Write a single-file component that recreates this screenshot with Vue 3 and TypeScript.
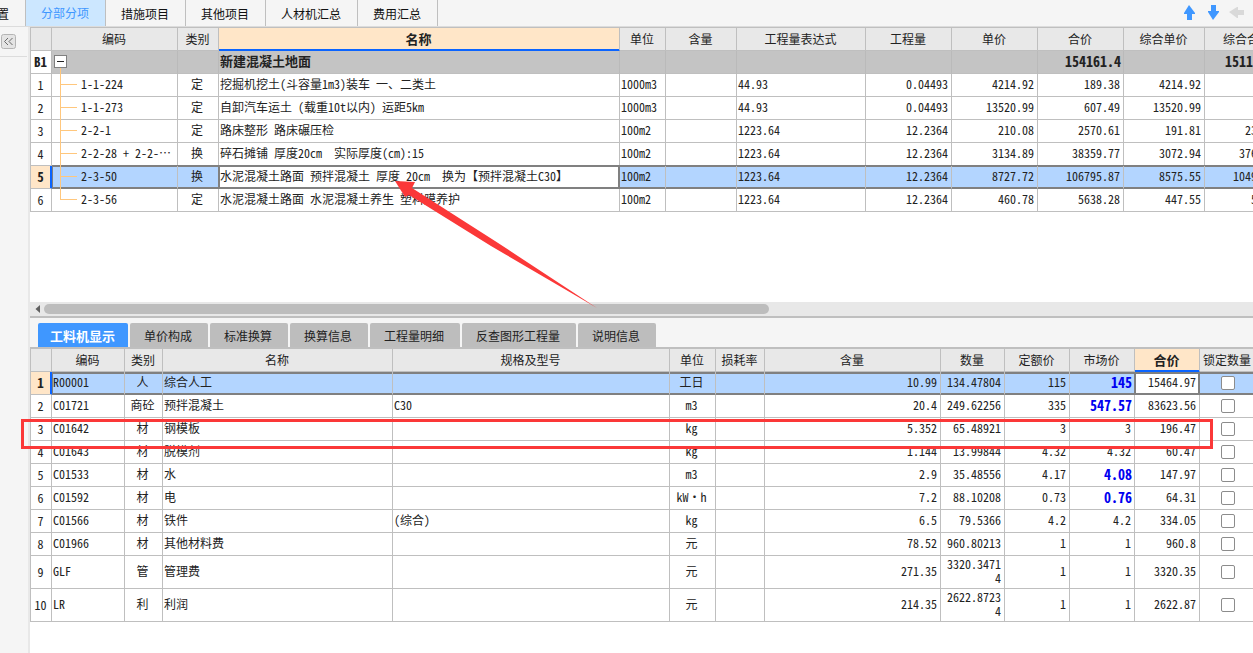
<script setup lang="ts">
import { ref } from 'vue'

interface Item {
  no: string
  code: string
  kind: string
  name: string
  unit: string
  expr: string
  qty: string
  price: string
  total: string
  compPrice: string
  compTotal: string
}

interface Resource {
  no: number
  code: string
  kind: string
  name: string
  spec: string
  unit: string
  content: string
  qty: string
  quota: string
  market: string
  adjusted?: boolean
  total: string
}

const topTabs = ['分部分项', '措施项目', '其他项目', '人材机汇总', '费用汇总']
const activeTop = ref('分部分项')

const detailTabs = ['工料机显示', '单价构成', '标准换算', '换算信息', '工程量明细', '反查图形工程量', '说明信息']
const activeDetail = ref('工料机显示')

const items: Item[] = [
  { no: '1', code: '1-1-224', kind: '定', name: '挖掘机挖土(斗容量1m3)装车 一、二类土', unit: '1000m3', expr: '44.93', qty: '0.04493', price: '4214.92', total: '189.38', compPrice: '4214.92', compTotal: '189.4' },
  { no: '2', code: '1-1-273', kind: '定', name: '自卸汽车运土 (载重10t以内) 运距5km', unit: '1000m3', expr: '44.93', qty: '0.04493', price: '13520.99', total: '607.49', compPrice: '13520.99', compTotal: '607.5' },
  { no: '3', code: '2-2-1', kind: '定', name: '路床整形 路床碾压检', unit: '100m2', expr: '1223.64', qty: '12.2364', price: '210.08', total: '2570.61', compPrice: '191.81', compTotal: '2347.06' },
  { no: '4', code: '2-2-28 + 2-2-⋯', kind: '换', name: '碎石摊铺 厚度20cm  实际厚度(cm):15', unit: '100m2', expr: '1223.64', qty: '12.2364', price: '3134.89', total: '38359.77', compPrice: '3072.94', compTotal: '37601.72' },
  { no: '5', code: '2-3-50', kind: '换', name: '水泥混凝土路面 预拌混凝土 厚度 20cm  换为【预拌混凝土C30】', unit: '100m2', expr: '1223.64', qty: '12.2364', price: '8727.72', total: '106795.87', compPrice: '8575.55', compTotal: '104933.86' },
  { no: '6', code: '2-3-56', kind: '定', name: '水泥混凝土路面 水泥混凝土养生 塑料膜养护', unit: '100m2', expr: '1223.64', qty: '12.2364', price: '460.78', total: '5638.28', compPrice: '447.55', compTotal: '5476.4' },
]

const resources: Resource[] = [
  { no: 1, code: 'R00001', kind: '人', name: '综合人工', spec: '', unit: '工日', content: '10.99', qty: '134.47804', quota: '115', market: '145', adjusted: true, total: '15464.97' },
  { no: 2, code: 'C01721', kind: '商砼', name: '预拌混凝土', spec: 'C30', unit: 'm3', content: '20.4', qty: '249.62256', quota: '335', market: '547.57', adjusted: true, total: '83623.56' },
  { no: 3, code: 'C01642', kind: '材', name: '钢模板', spec: '', unit: 'kg', content: '5.352', qty: '65.48921', quota: '3', market: '3', total: '196.47' },
  { no: 4, code: 'C01643', kind: '材', name: '脱模剂', spec: '', unit: 'kg', content: '1.144', qty: '13.99844', quota: '4.32', market: '4.32', total: '60.47' },
  { no: 5, code: 'C01533', kind: '材', name: '水', spec: '', unit: 'm3', content: '2.9', qty: '35.48556', quota: '4.17', market: '4.08', adjusted: true, total: '147.97' },
  { no: 6, code: 'C01592', kind: '材', name: '电', spec: '', unit: 'kW·h', content: '7.2', qty: '88.10208', quota: '0.73', market: '0.76', adjusted: true, total: '64.31' },
  { no: 7, code: 'C01566', kind: '材', name: '铁件', spec: '(综合)', unit: 'kg', content: '6.5', qty: '79.5366', quota: '4.2', market: '4.2', total: '334.05' },
  { no: 8, code: 'C01966', kind: '材', name: '其他材料费', spec: '', unit: '元', content: '78.52', qty: '960.80213', quota: '1', market: '1', total: '960.8' },
  { no: 9, code: 'GLF', kind: '管', name: '管理费', spec: '', unit: '元', content: '271.35', qty: '3320.34714', quota: '1', market: '1', total: '3320.35' },
  { no: 10, code: 'LR', kind: '利', name: '利润', spec: '', unit: '元', content: '214.35', qty: '2622.87234', quota: '1', market: '1', total: '2622.87' },
]

const selectedItem = ref('5')
const selectedResource = ref(1)
const locked = ref<number[]>([])
</script>

<template>
  <div class="app">
    <header class="topbar">
      <button type="button" class="top-tab cut">置</button>
      <button
        v-for="tab in topTabs"
        :key="tab"
        type="button"
        class="top-tab"
        :class="{ active: tab === activeTop }"
        @click="activeTop = tab"
      >{{ tab }}</button>
      <div class="tools">
        <button type="button" class="tool" aria-label="上移">
          <svg width="16" height="16" viewBox="0 0 16 16"><path d="M8 0 L14 8 V9 H11 V15 H6 V9 H3 V8 Z" fill="#3f97ff" /></svg>
        </button>
        <button type="button" class="tool" aria-label="下移">
          <svg width="16" height="16" viewBox="0 0 16 16"><path d="M8 15 L14 7 V6 H11 V0 H6 V6 H3 V7 Z" fill="#3f97ff" /></svg>
        </button>
        <button type="button" class="tool" aria-label="升级" disabled>
          <svg width="16" height="16" viewBox="0 0 16 16"><path d="M0 7 L8 2 H9 V5 H15 V10 H9 V13 H8 Z" fill="#d9d9d9" /></svg>
        </button>
      </div>
    </header>

    <div class="body">
      <aside class="side">
        <div class="side-head">
          <button type="button" class="collapse" aria-label="收起">
            <svg width="15" height="15" viewBox="0 0 15 15">
              <rect x="0.5" y="0.5" width="14" height="14" rx="2" fill="#e4e4e4" stroke="#b4b4b4" />
              <path d="M7 4 L3.5 7.5 L7 11 M11.5 4 L8 7.5 L11.5 11" fill="none" stroke="#6a6a6a" />
            </svg>
          </button>
        </div>
      </aside>

      <main class="main">
        <section class="upper">
          <table class="grid items">
            <colgroup>
              <col class="c-no"><col class="c-code"><col class="c-kind"><col class="c-name"><col class="c-unit"><col class="c-content">
              <col class="c-expr"><col class="c-num"><col class="c-num"><col class="c-num"><col class="c-comp"><col class="c-num">
            </colgroup>
            <thead>
              <tr>
                <th></th><th>编码</th><th>类别</th><th class="current">名称</th><th>单位</th><th>含量</th>
                <th>工程量表达式</th><th>工程量</th><th>单价</th><th>合价</th><th>综合单价</th><th>综合合价</th>
              </tr>
            </thead>
            <tbody>
              <tr class="group">
                <td class="no">B1</td>
                <td class="root">
                  <button type="button" class="fold" aria-label="折叠">
                    <svg width="13" height="13" viewBox="0 0 13 13">
                      <rect x="0.5" y="0.5" width="12" height="12" fill="#fff" stroke="#808080" />
                      <path d="M3 6.5 H10" stroke="#222" />
                    </svg>
                  </button>
                </td>
                <td></td><td>新建混凝土地面</td><td></td><td></td><td></td><td></td><td></td>
                <td class="r strong">154161.4</td><td></td><td class="r strong">151155.92</td>
              </tr>
              <tr
                v-for="item in items"
                :key="item.no"
                :class="{ selected: item.no === selectedItem }"
                @click="selectedItem = item.no"
              >
                <td class="no">{{ item.no }}</td>
                <td class="branch">{{ item.code }}</td>
                <td class="c">{{ item.kind }}</td>
                <td class="cursor">{{ item.name }}</td>
                <td>{{ item.unit }}</td>
                <td></td>
                <td>{{ item.expr }}</td>
                <td class="r">{{ item.qty }}</td>
                <td class="r">{{ item.price }}</td>
                <td class="r">{{ item.total }}</td>
                <td class="r">{{ item.compPrice }}</td>
                <td class="r">{{ item.compTotal }}</td>
              </tr>
            </tbody>
          </table>
        </section>

        <div class="scroll">
          <svg class="scroll-left" width="6" height="8" viewBox="0 0 6 8"><path d="M5 0 V8 L0.5 4 Z" fill="#606060" /></svg>
          <div class="track"><div class="thumb"></div></div>
        </div>

        <nav class="detail-tabs">
          <button
            v-for="tab in detailTabs"
            :key="tab"
            type="button"
            class="detail-tab"
            :class="{ active: tab === activeDetail }"
            @click="activeDetail = tab"
          >{{ tab }}</button>
        </nav>

        <section class="lower">
          <table class="grid resources">
            <colgroup>
              <col class="c-no"><col class="d-code"><col class="d-kind"><col class="d-name"><col class="d-spec"><col class="c-unit"><col class="d-loss">
              <col class="d-content"><col class="d-qty"><col class="d-price"><col class="d-price"><col class="d-price"><col class="d-lock">
            </colgroup>
            <thead>
              <tr>
                <th></th><th>编码</th><th>类别</th><th>名称</th><th>规格及型号</th><th>单位</th><th>损耗率</th>
                <th>含量</th><th>数量</th><th>定额价</th><th>市场价</th><th class="current">合价</th><th>锁定数量</th>
              </tr>
            </thead>
            <tbody>
              <tr
                v-for="res in resources"
                :key="res.no"
                :class="{ selected: res.no === selectedResource }"
                @click="selectedResource = res.no"
              >
                <td class="no">{{ res.no }}</td>
                <td class="first">{{ res.code }}</td>
                <td class="c">{{ res.kind }}</td>
                <td>{{ res.name }}</td>
                <td>{{ res.spec }}</td>
                <td class="c">{{ res.unit }}</td>
                <td></td>
                <td class="r">{{ res.content }}</td>
                <td class="r wrap">{{ res.qty }}</td>
                <td class="r">{{ res.quota }}</td>
                <td class="r" :class="{ adjusted: res.adjusted }">{{ res.market }}</td>
                <td class="r cursor">{{ res.total }}</td>
                <td class="lock"><input v-model="locked" type="checkbox" :value="res.no" :aria-label="'锁定数量 ' + res.name"></td>
              </tr>
            </tbody>
          </table>
        </section>
      </main>
    </div>

    <svg class="pointer" width="206" height="130" viewBox="0 0 206 130">
      <path d="M3 2 L23 3 L20 9 L103 62 L205 129 L99 67 L17 16 L13 18 Z" fill="#fb3838" />
    </svg>
    <div class="mark"></div>
  </div>
</template>

<style>
html,
body {
  background: #fff;
}
</style>

<style scoped>
.app {
  position: relative;
  display: flex;
  flex-direction: column;
  min-height: 100vh;
  overflow: hidden;
  background: #f5f5f5;
  color: #222;
  font-family: "Noto Sans CJK SC", "Liberation Sans", sans-serif;
  font-size: 12px;
  line-height: 14px;
  font-feature-settings: "hwid";
}

button {
  margin: 0;
  padding: 0;
  border: 0;
  background: none;
  color: inherit;
  font: inherit;
  font-feature-settings: inherit;
}

.topbar {
  display: flex;
  height: 26px;
  border-bottom: 1px solid #dcdcdc;
}

.top-tab {
  padding: 2px 16px 0 15px;
  border-right: 1px solid #bfbfbf;
  color: #111;
  white-space: nowrap;
}

.top-tab.cut {
  width: 26px;
  padding: 2px 16px 0 0;
  direction: rtl;
}

.top-tab.active {
  padding-top: 0;
  background: #cce7ff;
  color: #3f97ff;
}

.tools {
  display: flex;
  gap: 8px;
  align-items: center;
  margin-left: auto;
  padding-right: 8px;
}

.tool {
  width: 16px;
  height: 16px;
}

.tool svg,
.collapse svg,
.fold svg {
  display: block;
}

.body {
  display: flex;
  flex: 1;
}

.side {
  flex: 0 0 28px;
  border-right: 2px solid #e8e8e8;
}

.side-head {
  width: 26px;
  padding: 7px 0 7px 1px;
  border-bottom: 1px solid #dcdcdc;
}

.collapse,
.fold {
  display: block;
}

.main {
  display: flex;
  flex: 1;
  flex-direction: column;
  min-width: 0;
}

.upper {
  min-height: 275px;
  overflow: hidden;
  background: #fff;
}

.lower {
  flex: 1;
  overflow: hidden;
  border-top: 1px solid #bfbfbf;
  background: #fff;
}

.grid {
  table-layout: fixed;
  border-collapse: separate;
  border-spacing: 0;
  border-top: 1px solid #bfbfbf;
  border-left: 1px solid #bfbfbf;
}

.items { width: 1261px; }
.resources { width: 1226px; }

.c-no { width: 21px; }
.c-code { width: 126px; }
.c-kind { width: 41px; }
.c-name { width: 401px; }
.c-unit { width: 46px; }
.c-content { width: 71px; }
.c-expr { width: 129px; }
.c-num { width: 86px; }
.c-comp { width: 81px; }
.d-code { width: 73px; }
.d-kind { width: 38px; }
.d-name { width: 230px; }
.d-spec { width: 277px; }
.d-loss { width: 49px; }
.d-content { width: 176px; }
.d-qty { width: 64px; }
.d-price { width: 65px; }
.d-lock { width: 56px; }

th,
td {
  box-sizing: border-box;
  height: 23px;
  padding: 0 3px 2px 1px;
  border-right: 1px solid #bfbfbf;
  border-bottom: 1px solid #bfbfbf;
  white-space: pre;
  vertical-align: middle;
}

th {
  padding: 0 1px 0 0;
  background: #e8e8e8;
  font-weight: 400;
  text-align: center;
}

th.current {
  border-bottom-color: #0a64ff;
  background: #ffe6c8;
  box-shadow: inset 0 -1px #0a64ff;
  font-size: 13px;
  font-weight: 700;
}

.no {
  padding: 0 1px 0 0;
  background: #fff;
  text-align: center;
}

.c {
  text-align: center;
}

.r {
  text-align: right;
}

.resources .wrap {
  padding: 1px 3px 3px 5px;
  white-space: normal;
  word-break: break-all;
}

.group td {
  background: #c4c4c4;
  border-right-color: #bababa;
  font-size: 13px;
  font-weight: 700;
}

.group td.no {
  background: #fff;
}

.group td.strong {
  padding-right: 2px;
  font-size: 14px;
}

.adjusted {
  padding-right: 2px;
  color: #0000f0;
  font-size: 14px;
  font-weight: 700;
}

.root,
.branch {
  position: relative;
}

.root {
  padding: 0 2px 2px;
}

.branch {
  padding-left: 29px;
}

.branch::before {
  content: "";
  position: absolute;
  z-index: 1;
  top: -1px;
  bottom: 0;
  left: 8px;
  border-left: 1px solid #ffc77d;
}

.branch::after {
  content: "";
  position: absolute;
  top: 10px;
  left: 9px;
  width: 16px;
  border-top: 1px solid #ffc77d;
}

.root::after {
  content: "";
  position: absolute;
  top: 17px;
  bottom: 0;
  left: 8px;
  border-left: 1px solid #ffc77d;
}

tr:last-child .branch::before {
  bottom: 11px;
}

.selected td {
  border-bottom-color: #808080;
  background: #b3d5ff;
  box-shadow: inset 0 1px #808080, inset 0 -1px #808080, 0 -1px #808080;
}

.resources .selected td {
  box-shadow: inset 0 2px #808080, inset 0 -1px #808080;
}

.selected td.no,
.resources .selected td.no {
  border-right-color: #0a64ff;
  border-bottom-color: #bfbfbf;
  background: #ffe6c8;
  box-shadow: inset -1px 0 #0a64ff;
  font-size: 13px;
  font-weight: 700;
}

.selected td.branch {
  box-shadow: inset 1px 0 #808080, inset 0 1px #808080, inset 0 -1px #808080, 0 -1px #808080;
}

.resources .selected td.first {
  box-shadow: inset 1px 0 #808080, inset 0 2px #808080, inset 0 -1px #808080;
}

.selected td.cursor {
  border-right-color: #808080;
  background: #fff;
  box-shadow: inset 1px 0 #808080, inset -1px 0 #808080, inset 0 1px #808080, inset 0 -1px #808080, 0 -1px #808080, -1px 0 #808080;
}

.resources .selected td.cursor {
  box-shadow: inset 1px 0 #808080, inset -1px 0 #808080, inset 0 2px #808080, inset 0 -1px #808080, -1px 0 #808080;
}

.lock {
  padding: 0;
}

.lock input {
  display: block;
  width: 14px;
  height: 14px;
  margin: 0 auto;
  border: 1px solid #8c8c8c;
  border-radius: 2px;
  background: #fff;
  appearance: none;
}

.lock input:checked {
  background: #3f97ff;
}

.scroll {
  display: flex;
  gap: 3px;
  align-items: center;
  height: 14px;
  padding-left: 5px;
  border-bottom: 2px solid #bfbfbf;
  background: #e8e8e8;
}

.scroll svg {
  flex: none;
}

.track {
  flex: 1;
}

.thumb {
  width: 60%;
  height: 10px;
  border-radius: 5px;
  background: #bdbdbd;
}

.detail-tabs {
  display: flex;
  gap: 2px;
  padding: 5px 8px 0;
}

.detail-tab {
  height: 24px;
  padding: 2px 16px 0 14px;
  border-radius: 2px 2px 0 0;
  background: #bdbdbd;
  white-space: nowrap;
}

.detail-tab.active {
  padding: 2px 13px 0 12px;
  background: #3f97ff;
  color: #fff;
  font-size: 13px;
  font-weight: 700;
}

.pointer {
  position: absolute;
  top: 179px;
  left: 392px;
  pointer-events: none;
}

.mark {
  position: absolute;
  top: 419px;
  right: 40px;
  left: 21px;
  box-sizing: border-box;
  height: 30px;
  border: 3px solid #fb3838;
  pointer-events: none;
}
</style>
